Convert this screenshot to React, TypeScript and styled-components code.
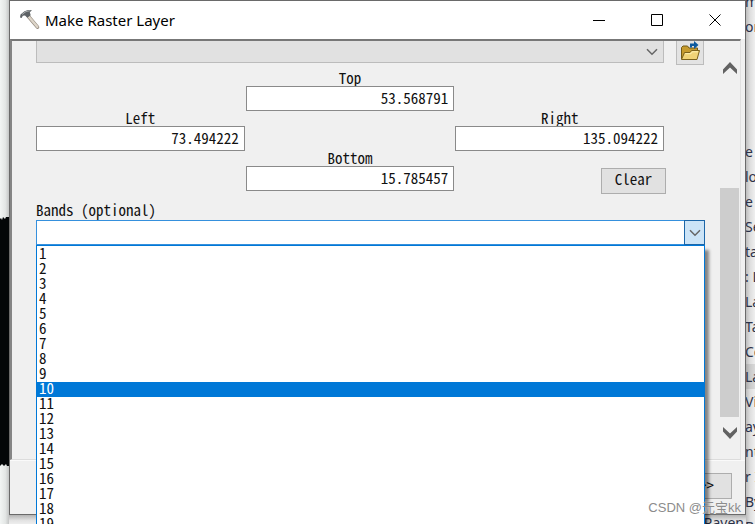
import React, { useState } from "react";
import styled, { createGlobalStyle } from "styled-components";

const mono = `"Noto Sans Mono CJK SC", "Liberation Mono", "Noto Sans CJK SC", monospace`;
const sans = `"Noto Sans", "Open Sans", "Noto Sans CJK SC", sans-serif`;

const GlobalStyle = createGlobalStyle`
  * { box-sizing: border-box; }
  body { margin: 0; overflow: hidden; background: #f3f4f4; color: #111; }
  button, input, select { font: inherit; color: inherit; margin: 0; border-radius: 0; }
`;

const Desktop = styled.div`
  position: relative;
  display: grid;
  grid-template-columns: 9px minmax(0, 1fr) 9px;
  grid-template-rows: minmax(0, 1fr) 9px;
  height: 100vh;
  overflow: hidden;
`;

const MapEdge = styled.div`
  grid-row: 1 / 3;
  display: flex;
  flex-direction: column;
  background: linear-gradient(90deg, #f2f5f4, #e3e6e5 60%, #c4c6c6);
`;

const MapShape = styled.svg`
  display: block;
  width: 9px;
  height: 252px;
  margin-top: 216px;
`;

const Toolbox = styled.ul`
  list-style: none;
  margin: 0;
  padding: 0;
  grid-row: 1 / 3;
  grid-column: 3;
  overflow: hidden;
  background: linear-gradient(90deg, #bdbdbd, #dedede 45%, #efefef);
  font: 14px/25px ${sans};
  text-indent: -1px;
  color: #2c3248;
`;

const ToolRow = styled.li<{ $active?: boolean }>`
  height: 25px;
  white-space: pre;
  background: ${(p) => (p.$active ? "rgba(0, 0, 0, 0.09)" : "transparent")};

  &:first-child { height: 14px; line-height: 4px; }
`;

const ToolFooter = styled.div`
  grid-column: 2;
  grid-row: 2;
  overflow: hidden;
  padding-right: 2px;
  text-align: right;
  font: 14px/16px ${sans};
  color: #2c3248;
  background: linear-gradient(#b4b4b4, #e2e2e2 60%, #eee);
`;

const Dialog = styled.section`
  display: flex;
  flex-direction: column;
  min-width: 0;
  border: 1px solid #6a6a6a;
  background: #f0f0f0;
`;

const TitleBar = styled.header`
  display: flex;
  align-items: center;
  height: 38px;
  flex: none;
  padding: 0 1px 0 9px;
  background: #fff;
`;

const Title = styled.h1`
  flex: 1;
  margin: 0 0 0 4px;
  font: 400 15px/24px ${sans};
  color: #000;
`;

const CaptionButton = styled.button`
  display: flex;
  align-items: center;
  justify-content: center;
  width: 58px;
  height: 38px;
  padding: 0;
  border: 0;
  background: transparent;
`;

const Panel = styled.div`
  display: flex;
  flex: 1;
  min-height: 0;
  margin-right: 4px;
  border: solid;
  border-width: 2px 1px 1px 2px;
  border-color: #777 #e0e0e0 #dcdcdc #858585;
  font: 15px/12px ${mono};
`;

const Form = styled.form`
  flex: 1;
  min-width: 0;
  padding: 0 15px 0 24px;
`;

const SourceRow = styled.div`
  display: flex;
  align-items: flex-start;
  gap: 12px;
  padding-right: 1px;
`;

const SelectBox = styled.div`
  display: grid;
  align-items: center;
  flex: 1;
  height: 22px;
  border: 1px solid #bcbcbc;
  border-top: 0;
  background: #e1e1e1;

  > * { grid-area: 1 / 1; }
  > svg { justify-self: end; margin-right: 5px; pointer-events: none; }
`;

const SourceSelect = styled.select`
  appearance: none;
  width: 100%;
  height: 100%;
  padding: 0 24px 0 4px;
  border: 0;
  background: transparent;
`;

const BrowseButton = styled.button`
  display: flex;
  justify-content: center;
  width: 28px;
  height: 24px;
  padding: 0;
  border: 1px solid #bcbcbc;
  border-top: 0;
  background: #e3e3e3;
`;

const Extent = styled.div`
  display: grid;
  grid-template-columns: repeat(3, minmax(0, 1fr));
  gap: 1px;
  margin: 7px 41px 0 0;
`;

const Cell = styled.div<{ $col: number; $row: number }>`
  grid-column: ${(p) => p.$col};
  grid-row: ${(p) => p.$row};
  display: flex;
  flex-direction: column;
`;

const FieldLabel = styled.label`
  align-self: center;
  height: 14px;
`;

const NumberInput = styled.input`
  width: 100%;
  height: 25px;
  padding: 0 5px 3px;
  border: 1px solid #8a8a8a;
  outline: 0;
  background: #fff;
  text-align: right;
`;

const ClearButton = styled.button`
  grid-column: 3;
  grid-row: 3;
  justify-self: end;
  align-self: end;
  width: 65px;
  height: 26px;
  padding: 0 0 4px;
  margin: 0 -2px -3px 0;
  border: 1px solid #adadad;
  background: #e1e1e1;
`;

const Bands = styled.div`
  position: relative;
  margin-top: 13px;
`;

const BandsLabel = styled.label`
  display: block;
  height: 16px;
`;

const Combo = styled.div`
  display: flex;
  height: 25px;
  border: 1px solid #3590dd;
  background: #fff;
`;

const ComboInput = styled.input`
  flex: 1;
  min-width: 0;
  padding: 0 4px;
  border: 0;
  outline: 0;
  background: transparent;
`;

const ComboToggle = styled.button`
  display: flex;
  align-items: center;
  justify-content: center;
  width: 21px;
  margin: -1px;
  padding: 0;
  border: 1px solid #1c66a8;
  background: #cce4f7;
`;

const BandList = styled.ul`
  position: absolute;
  z-index: 2;
  top: 100%;
  left: 0;
  right: 0;
  margin: 0;
  padding: 1px 0;
  list-style: none;
  border: 1px solid #0078d7;
  background: #fff;
  box-shadow: 4px 5px 3px rgba(0, 0, 0, 0.45);
`;

const BandOption = styled.li<{ $selected: boolean }>`
  height: 15px;
  padding-left: 2px;
  cursor: default;
  color: ${(p) => (p.$selected ? "#fff" : "#111")};
  background: ${(p) => (p.$selected ? "#0078d7" : "transparent")};
`;

const ScrollBar = styled.div`
  display: flex;
  flex-direction: column;
  align-items: center;
  width: 19px;
  margin-right: 1px;
  padding: 21px 0 20px;
`;

const ScrollArrow = styled.button`
  display: flex;
  padding: 0;
  border: 0;
  background: transparent;
`;

const ScrollTrack = styled.div`
  display: flex;
  flex-direction: column;
  justify-content: flex-end;
  flex: 1;
  width: 100%;
  padding-bottom: 9px;
`;

const ScrollThumb = styled.div`
  height: 67%;
  background: #cdcdcd;
`;

const Footer = styled.footer`
  display: flex;
  justify-content: flex-end;
  height: 54px;
  flex: none;
  padding: 12px 13px 0;
  border-top: 1px solid #fafafa;
`;

const HelpButton = styled.button`
  width: 126px;
  height: 26px;
  padding: 0 17px 2px 0;
  border: 1px solid #adadad;
  background: #e1e1e1;
  font: 15px/12px ${mono};
  text-align: right;
`;

const Watermark = styled.span`
  position: absolute;
  z-index: 3;
  right: 14px;
  bottom: 6px;
  font: 13px/20px "Liberation Sans", "Noto Sans CJK SC", sans-serif;
  color: #8c8c8c;
  text-shadow: 0 0 1px #fff;
`;

const Hammer = () => (
  <svg width="22" height="22" viewBox="0 0 22 22" aria-hidden="true">
    <path d="M9.5 7.5 L18.5 18.2" stroke="#968c80" strokeWidth="3.6" strokeLinecap="round" />
    <path d="M9.4 7.2 L18.3 17.8" stroke="#ddd5c9" strokeWidth="2.4" strokeLinecap="round" />
    <path d="M1 8.5 L1.5 5.5 L5.5 2.2 L9 1 L13 1.3 L10.8 3.2 L11.7 6.2 L8.3 8.8 L6 6.6 L3.8 6.8 L2.7 9 Z" fill="#5d6265" />
    <path d="M3 5.5 L7 2.5 L10.8 1.8" stroke="#a9adae" strokeWidth="1" fill="none" />
  </svg>
);

const Folder = () => (
  <svg width="22" height="20" viewBox="0 0 22 20" aria-hidden="true">
    <path d="M2.5 18V6.5L4 5h4.500l1.500 2H18.500v4" fill="#c69b2e" stroke="#725a16" />
    <path d="M2.500 18.5 L5.5 11.5 H11 L12.500 9.500 H20.5 L18 18.5 Z" fill="#f0d377" stroke="#7b611b" />
    <path d="M6.2 12.7 H12 L13.3 10.8 H19" stroke="#fff1b4" fill="none" />
    <path d="M11 6.500V2.500h4V0l4.500 4-4.500 4V5h-2v1.500z" fill="#0d5a9f" />
  </svg>
);

const Chevron = () => (
  <svg width="12" height="8" viewBox="0 0 12 8" fill="none" aria-hidden="true">
    <path d="M1 1.2 L6 6.2 L11 1.2" stroke="#666" strokeWidth="1.5" />
  </svg>
);

const ThickChevron = ({ up = false }: { up?: boolean }) => (
  <svg width="16" height="13" viewBox="0 0 16 13" aria-hidden="true">
    <path d={up ? "M8 0 L15 7.5 V12 L8 5.5 L1 12 V7.5 Z" : "M8 13 L15 5.5 V1 L8 7.500 L1 1 V5.5 Z"} fill="#626262" />
  </svg>
);

const tools = ["m", "or", "", "", "", "", "e W", "lo", "e I", "Se", "ta", ": L", "La", "Ta", "Co", "La", "Vie", "ay", "nt", "r I", "By", "By"];

const extent = [
  { id: "top", label: "Top", value: "53.568791", col: 2, row: 1 },
  { id: "left", label: "Left", value: "73.494222", col: 1, row: 2 },
  { id: "right", label: "Right", value: "135.094222", col: 3, row: 2 },
  { id: "bottom", label: "Bottom", value: "15.785457", col: 2, row: 3 },
];

const bands = Array.from({ length: 19 }, (_, i) => i + 1);

export default function App() {
  const [active, setActive] = useState(10);

  return (
    <Desktop>
      <GlobalStyle />
      <MapEdge>
        <MapShape viewBox="0 0 9 252" aria-hidden="true">
          <path d="M0 3 L1 2 L2 4 L3 1 L5 3 L6 1 H9 V250 H7 L6 248 L4 250 L2 248 L0 250 Z" fill="#030608" />
        </MapShape>
      </MapEdge>
      <Dialog aria-label="Make Raster Layer">
        <TitleBar>
          <Hammer />
          <Title>Make Raster Layer</Title>
          <CaptionButton aria-label="Minimize">
            <svg width="12" height="12"><path d="M0 6.5H12" stroke="#000" /></svg>
          </CaptionButton>
          <CaptionButton aria-label="Maximize">
            <svg width="12" height="12"><path d="M.5 .5H11.5V11.5H.5Z" fill="none" stroke="#000" /></svg>
          </CaptionButton>
          <CaptionButton aria-label="Close">
            <svg width="12" height="12"><path d="M.5 .5L11.5 11.5M11.5 .5L.5 11.5" stroke="#000" /></svg>
          </CaptionButton>
        </TitleBar>
        <Panel>
          <Form onSubmit={(e) => e.preventDefault()}>
            <SourceRow>
              <SelectBox>
                <SourceSelect aria-label="Template extent" disabled>
                  <option></option>
                </SourceSelect>
                <Chevron />
              </SelectBox>
              <BrowseButton type="button" aria-label="Browse"><Folder /></BrowseButton>
            </SourceRow>
            <Extent>
              {extent.map((f) => (
                <Cell key={f.id} $col={f.col} $row={f.row}>
                  <FieldLabel htmlFor={f.id}>{f.label}</FieldLabel>
                  <NumberInput id={f.id} defaultValue={f.value} />
                </Cell>
              ))}
              <ClearButton type="button">Clear</ClearButton>
            </Extent>
            <Bands>
              <BandsLabel htmlFor="bands">Bands (optional)</BandsLabel>
              <Combo>
                <ComboInput id="bands" role="combobox" aria-expanded="true" aria-controls="band-list" />
                <ComboToggle type="button" aria-label="Show bands"><Chevron /></ComboToggle>
              </Combo>
              <BandList id="band-list" role="listbox" aria-label="Bands">
                {bands.map((n) => (
                  <BandOption
                    key={n}
                    role="option"
                    aria-selected={n === active}
                    $selected={n === active}
                    onMouseEnter={() => setActive(n)}
                  >
                    {n}
                  </BandOption>
                ))}
              </BandList>
            </Bands>
          </Form>
          <ScrollBar>
            <ScrollArrow type="button" aria-label="Scroll up"><ThickChevron up /></ScrollArrow>
            <ScrollTrack><ScrollThumb /></ScrollTrack>
            <ScrollArrow type="button" aria-label="Scroll down"><ThickChevron /></ScrollArrow>
          </ScrollBar>
        </Panel>
        <Footer>
          <HelpButton type="button">&gt;&gt;</HelpButton>
        </Footer>
      </Dialog>
      <Toolbox>
        {tools.map((t, i) => <ToolRow key={i} $active={i === 15}>{t}</ToolRow>)}
      </Toolbox>
      <ToolFooter>Raven</ToolFooter>
      <Watermark>CSDN @元宝kk</Watermark>
    </Desktop>
  );
}
